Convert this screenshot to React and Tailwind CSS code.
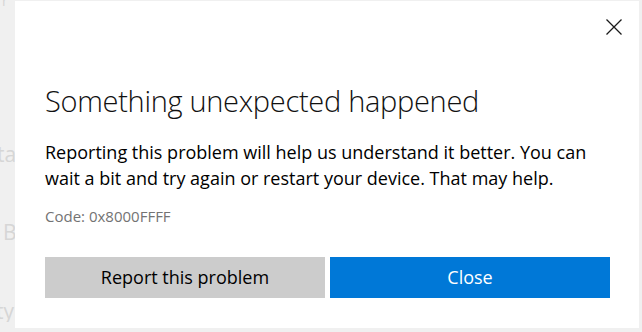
// Faded page text that peeks out from behind the dialog on the left
function BackdropStrip() {
  return (
    <div className="w-[15px] flex-shrink-0 overflow-hidden text-[#d6d6d6] text-[21px] leading-none whitespace-nowrap flex flex-col">
      <span className="mt-[-6px] ml-[2px] text-[14px]">r</span>
      <span className="mt-[136px] ml-[-3px]">tag</span>
      <span className="mt-[57px] ml-[3px]">Ba</span>
      <span className="mt-[58px] ml-[-4px]">ty</span>
    </div>
  );
}

export default function App() {
  return (
    <div
      className="w-[642px] h-[332px] bg-[#f0f0f0] flex items-start overflow-hidden"
      style={{ fontFamily: '"Segoe UI", "Open Sans", sans-serif' }}
    >
      <BackdropStrip />

      {/* Error dialog */}
      <div className="w-[624px] h-[327px] mt-[1px] bg-white flex flex-col pl-[30px] pr-[29px]">
        <div className="flex justify-end pt-[18px] -mr-[12px]">
          <button className="w-[16px] h-[16px] text-[#1a1a1a]">
            <svg width="16" height="16" viewBox="0 0 16 16" fill="none" stroke="currentColor" strokeWidth="1.3">
              <path d="M0.5 0.5 L15.5 15.5 M15.5 0.5 L0.5 15.5" />
            </svg>
          </button>
        </div>

        <h1 className="mt-[51px] text-[29px] font-light text-[#111] leading-none tracking-[-0.3px]">
          Something unexpected happened
        </h1>

        <p className="mt-[24px] text-[18px] leading-[26px] text-black">
          Reporting this problem will help us understand it better. You can wait a bit and try again or restart your device. That may help.
        </p>

        <p className="mt-[15px] text-[15px] leading-[20px] text-[#737373]">Code: 0x8000FFFF</p>

        <div className="mt-[31px] flex gap-[5px]">
          <button className="w-[280px] h-[41px] bg-[#cccccc] text-[18px] text-black">
            Report this problem
          </button>
          <button className="w-[280px] h-[41px] bg-[#0078d7] text-[18px] text-white">
            Close
          </button>
        </div>
      </div>
    </div>
  );
}
